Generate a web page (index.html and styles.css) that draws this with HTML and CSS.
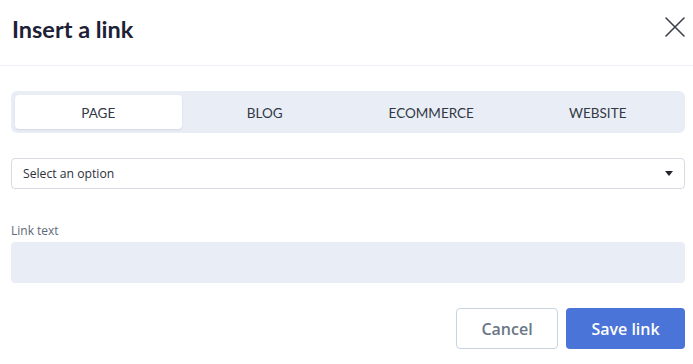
FILE: index.html
```html
<!DOCTYPE html>
<html>
<head>
<meta charset="utf-8">
<link rel="stylesheet" href="styles.css">
</head>
<body>
<div class="dialog">
  <div class="header">
    <h1 class="title">Insert a link</h1>
    <button class="close" aria-label="Close">
      <svg width="20" height="20" viewBox="0 0 20 20"><path d="M1 1 L19 19 M19 1 L1 19" stroke="#3b404b" stroke-width="1.6" fill="none" stroke-linecap="round"/></svg>
    </button>
  </div>
  <div class="body">
    <div class="tabs">
      <div class="tab active">PAGE</div>
      <div class="tab">BLOG</div>
      <div class="tab">ECOMMERCE</div>
      <div class="tab">WEBSITE</div>
    </div>
    <div class="select">
      <span>Select an option</span>
      <span class="caret"></span>
    </div>
    <label class="label">Link text</label>
    <div class="input"></div>
    <div class="actions">
      <button class="btn cancel">Cancel</button>
      <button class="btn save">Save link</button>
    </div>
  </div>
</div>
</body>
</html>
```
FILE: styles.css
```css
html, body { margin: 0; padding: 0; background: #fff; }
body { width: 693px; height: 364px; overflow: hidden; font-family: "Open Sans", sans-serif; }
.dialog { display: flex; flex-direction: column; }
.header {
  height: 65px;
  border-bottom: 1px solid #edf1f6;
  display: flex;
  align-items: center;
  justify-content: space-between;
  padding: 0 8px 0 12px;
}
.title {
  margin: 0;
  font-family: Lato, sans-serif;
  font-weight: 700;
  font-size: 23.5px;
  color: #1d2136;
  position: relative;
  top: -4px;
}
.close {
  border: 0; background: none; padding: 0; width: 20px; height: 20px;
  display: flex; position: relative; top: -6px;
}
.body { padding: 25px 8px 0 11px; display: flex; flex-direction: column; }
.tabs {
  height: 42px;
  box-sizing: border-box;
  background: #e9eef6;
  border-radius: 6px;
  padding: 4px;
  display: grid;
  grid-template-columns: repeat(4, 1fr);
}
.tab {
  display: flex; align-items: center; justify-content: center;
  font-family: Lato, sans-serif;
  font-size: 13.5px;
  color: #323844;
  border-radius: 4px;
  padding-top: 1px;
}
.tab.active { background: #fff; box-shadow: 0 1px 2px rgba(40,60,90,0.12); }
.select {
  margin-top: 25px;
  height: 31px;
  box-sizing: border-box;
  border: 1px solid #d8dce2;
  border-radius: 4px;
  display: flex; align-items: center; justify-content: space-between;
  padding: 0 11px 0 11px;
  font-size: 12.2px;
  font-weight: 500;
  color: #2c313c;
}
.caret {
  width: 0; height: 0;
  border-left: 4.5px solid transparent;
  border-right: 4.5px solid transparent;
  border-top: 5px solid #23262d;
}
.label {
  margin-top: 34px;
  font-size: 12px;
  line-height: 16px;
  color: #5d6878;
}
.input {
  margin-top: 3px;
  height: 41px;
  background: #e9eef6;
  border-radius: 4px;
}
.actions {
  margin-top: 25px;
  display: flex; justify-content: flex-end; gap: 8px;
}
.btn {
  height: 41px;
  border-radius: 4px;
  font-family: "Open Sans", sans-serif;
  font-weight: 600;
  font-size: 16px;
  box-sizing: border-box;
}
.cancel { width: 102px; background: #fff; border: 1px solid #c6d4e1; color: #6a7686; }
.save { width: 119px; background: #4a74d7; border: 0; color: #fff; }
```
